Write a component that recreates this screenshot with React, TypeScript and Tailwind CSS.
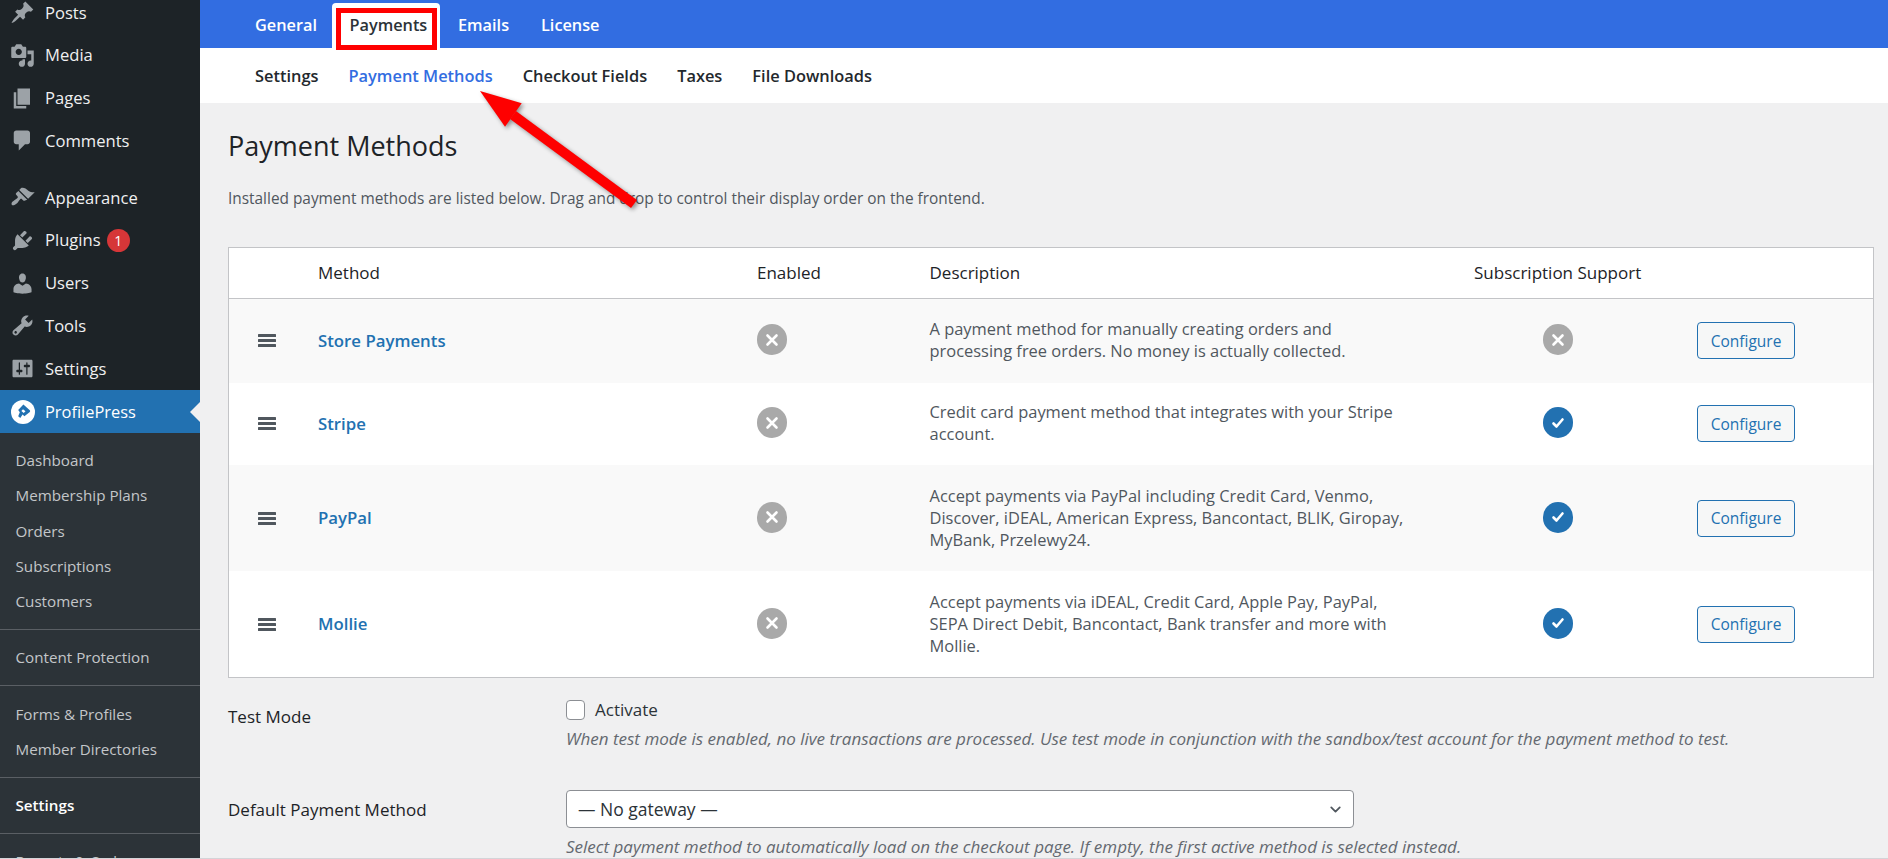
import React from "react";
import { ChevronDown } from "lucide-react";

const icons: Record<string, string> = {
  post: "M10.44 3.02l1.82-1.82 6.36 6.35-1.83 1.82c-1.05-.68-2.48-.57-3.41.36l-.75.75c-.92.93-1.04 2.35-.35 3.41l-1.83 1.82-2.41-2.41-2.8 2.79c-.42.42-3.38 2.71-3.8 2.29s1.86-3.39 2.28-3.81l2.79-2.79L4.1 9.36l1.83-1.82c1.05.69 2.48.57 3.4-.36l.75-.75c.93-.92 1.05-2.35.36-3.41z",
  media: "M13 11V4c0-.55-.45-1-1-1h-1.67L9 1H5L3.67 3H2c-.55 0-1 .45-1 1v7c0 .55.45 1 1 1h10c.55 0 1-.45 1-1zM7 4.5c1.38 0 2.5 1.12 2.5 2.5S8.38 9.5 7 9.5 4.5 8.38 4.5 7 5.62 4.5 7 4.5zM14 6h5v10.5c0 1.38-1.12 2.5-2.5 2.5S14 17.88 14 16.5s1.12-2.5 2.5-2.5c.17 0 .34.02.5.05V9h-3V6zm-4 8.05V13h2v3.5c0 1.38-1.12 2.5-2.5 2.5S7 17.88 7 16.5 8.12 14 9.5 14c.17 0 .34.02.5.05z",
  page: "M6 15V2h10v13H6zm-1 1h8v2H3V5h2v11z",
  comments: "M5 2h9c1.1 0 2 .9 2 2v7c0 1.1-.9 2-2 2h-2l-5 5v-5H5c-1.1 0-2-.9-2-2V4c0-1.1.9-2 2-2z",
  appearance: "M14.48 11.06L7.41 3.99l1.5-1.5c.5-.56 2.3-.47 3.51.32 1.21.8 1.43 1.28 2.91 2.1 1.18.64 2.45 1.26 4.45.85zm-.71.71L6.7 4.7 4.93 6.47c-.39.39-.39 1.02 0 1.41l1.06 1.06c.39.39.39 1.03 0 1.42-.6.6-1.43 1.11-2.21 1.69-.35.26-.7.53-1.01.84C1.43 13.23.78 15.24 1.53 16s2.76-.1 4.11-1.44c.31-.31.58-.66.84-1.01.58-.78 1.09-1.61 1.69-2.21.39-.39 1.02-.39 1.41 0l1.06 1.06c.39.39 1.02.39 1.41 0z",
  plugins: "M13.11 4.36L9.87 7.6 8 5.73l3.24-3.24c.35-.34 1.05-.2 1.56.32.52.51.66 1.21.31 1.55zm-8 1.77l.91-1.12 9.01 9.01-1.19.84c-.71.71-2.63 1.16-3.82 1.16H6.14L4.9 17.26c-.59.59-1.54.59-2.12 0-.59-.58-.59-1.53 0-2.12l1.24-1.24v-3.88c0-1.13.4-3.19 1.09-3.89zm7.26 3.97l3.24-3.24c.34-.35 1.04-.21 1.55.31.52.51.66 1.21.31 1.55l-3.24 3.25z",
  users: "M10 9.25c-2.27 0-2.73-3.44-2.73-3.44C7 4.02 7.82 2 9.97 2c2.16 0 2.98 2.02 2.71 3.81 0 0-.41 3.44-2.68 3.44zm0 2.57L12.72 10c2.39 0 4.52 2.33 4.52 4.53v2.49s-3.65 1.13-7.24 1.13c-3.65 0-7.24-1.13-7.24-1.13v-2.49c0-2.25 1.94-4.48 4.47-4.48z",
  tools: "M16.68 9.77c-1.34 1.34-3.3 1.67-4.95.99l-5.41 6.52c-.99.99-2.59.99-3.58 0s-.99-2.59 0-3.57l6.52-5.42c-.68-1.65-.35-3.61.99-4.95 1.28-1.28 3.12-1.62 4.72-1.06l-2.89 2.89 2.82 2.82 2.86-2.87c.53 1.58.18 3.39-1.08 4.65zM3.81 16.21c.4.39 1.04.39 1.43 0 .4-.4.4-1.04 0-1.43-.39-.4-1.03-.4-1.43 0-.39.39-.39 1.03 0 1.43z",
  settings: "M18 16V4c0-.55-.45-1-1-1H3c-.55 0-1 .45-1 1v12c0 .55.45 1 1 1h14c.55 0 1-.45 1-1zM8 11h1c.55 0 1 .45 1 1s-.45 1-1 1H8v1.5c0 .28-.22.5-.5.5s-.5-.22-.5-.5V13H6c-.55 0-1-.45-1-1s.45-1 1-1h1V5.5c0-.28.22-.5.5-.5s.5.22.5.5V11zm5-2h-1c-.55 0-1-.45-1-1s.45-1 1-1h1V5.5c0-.28.22-.5.5-.5s.5.22.5.5V7h1c.55 0 1 .45 1 1s-.45 1-1 1h-1v5.5c0 .28-.22.5-.5.5s-.5-.22-.5-.5V9z",
};

function MenuRow({ icon, label, badge }: { icon: string; label: string; badge?: string }) {
  return (
    <div className="flex h-[42.75px] items-center pl-[10px]">
      <svg viewBox="0 0 20 20" className="h-[25px] w-[25px] shrink-0 fill-[#9ca2a7]">
        <path d={icons[icon]} />
      </svg>
      <span className="ml-[10px] pt-[1px] text-[16.6px] text-[#f0f0f1]">{label}</span>
      {badge && (
        <span className="ml-[6px] flex h-[23px] w-[23px] items-center justify-center rounded-full bg-[#d63638] text-[14px] text-white">
          {badge}
        </span>
      )}
    </div>
  );
}

function SubRow({ label, bold }: { label: string; bold?: boolean }) {
  return (
    <div className={`flex h-[35.25px] items-center pl-[15.5px] pt-[1px] text-[15.2px] ${bold ? "font-semibold text-white" : "text-[#c3c6c9]"}`}>
      {label}
    </div>
  );
}

function SubDivider() {
  return <div className="my-[10px] h-px bg-[#5a5f64]" />;
}

function Sidebar() {
  return (
    <aside className="-mt-[8.75px] w-[200px] shrink-0 bg-[#1d2327]">
      <MenuRow icon="post" label="Posts" />
      <MenuRow icon="media" label="Media" />
      <MenuRow icon="page" label="Pages" />
      <MenuRow icon="comments" label="Comments" />
      <div className="h-[14px]" />
      <MenuRow icon="appearance" label="Appearance" />
      <MenuRow icon="plugins" label="Plugins" badge="1" />
      <MenuRow icon="users" label="Users" />
      <MenuRow icon="tools" label="Tools" />
      <MenuRow icon="settings" label="Settings" />
      <div className="relative flex h-[43px] items-center bg-[#2271b1] pl-[10.5px]">
        <svg viewBox="0 0 24 24" className="h-[24px] w-[24px] shrink-0">
          <circle cx="12" cy="12" r="12" fill="#fff" />
          <path
            fillRule="evenodd"
            d="M12.4 4.6l6.4 5.7c.5.5.5 1.1 0 1.6l-5.4 4.3-1.8-1.6-2.3 3.4-2.1-1.7 1.6-4-1.6-2.2zM12 9.2l-1.6 1.7 2.3 2.1 1.8-1.7z"
            fill="#2271b1"
          />
        </svg>
        <span className="ml-[10.5px] pt-[1px] text-[16.4px] text-white">ProfilePress</span>
        <svg viewBox="0 0 10 20" className="absolute right-0 top-[11.5px] h-[20px] w-[10px] fill-[#f0f0f1]">
          <path d="M10 0L0 10l10 10z" />
        </svg>
      </div>
      <div className="bg-[#2c3338] pt-[9.5px]">
        <SubRow label="Dashboard" />
        <SubRow label="Membership Plans" />
        <SubRow label="Orders" />
        <SubRow label="Subscriptions" />
        <SubRow label="Customers" />
        <SubDivider />
        <SubRow label="Content Protection" />
        <SubDivider />
        <SubRow label="Forms & Profiles" />
        <SubRow label="Member Directories" />
        <SubDivider />
        <SubRow label="Settings" bold />
        <SubDivider />
        <SubRow label="Reports & Orders" />
      </div>
    </aside>
  );
}

function TopTabs() {
  return (
    <div className="flex h-[48px] items-end bg-[#326de1] pl-[55px] text-[16.3px] font-semibold text-white">
      <div className="flex h-[45px] w-[77px] items-center pb-[1px]">General</div>
      <div className="relative flex h-[45px] w-[108px] items-center justify-start rounded-t-[4px] bg-white pb-[1px] pl-[17.5px] text-[#2c3338]">
        Payments
        <div className="absolute -bottom-[2px] left-[4px] top-[5px] w-[101px] border-[5px] border-[#ff0000]" />
      </div>
      <div className="flex h-[45px] w-[101px] items-center pb-[1px] pl-[18px]">Emails</div>
      <div className="flex h-[45px] items-center pb-[1px]">License</div>
    </div>
  );
}

function SubTabs() {
  return (
    <div className="flex h-[55px] items-center gap-[30px] bg-white pl-[55px] pt-[2px] text-[16.4px] font-semibold text-[#23282d]">
      <span>Settings</span>
      <span className="text-[#326de1]">Payment Methods</span>
      <span>Checkout Fields</span>
      <span>Taxes</span>
      <span>File Downloads</span>
    </div>
  );
}

function Status({ on }: { on: boolean }) {
  return (
    <div className={`-mt-[2px] flex h-[31px] w-[30px] items-center justify-center rounded-full ${on ? "bg-[#2271b1]" : "bg-[#a9a9a9]"}`}>
      {on ? (
        <svg viewBox="0 0 14 14" className="h-[14px] w-[14px]" fill="none" stroke="#fff" strokeWidth="2.6" strokeLinecap="round" strokeLinejoin="round">
          <path d="M2.5 7.5l3 3 6-7" />
        </svg>
      ) : (
        <svg viewBox="0 0 14 14" className="h-[14px] w-[14px]" fill="none" stroke="#fff" strokeWidth="2.6" strokeLinecap="round">
          <path d="M2.5 2.5l9 9M11.5 2.5l-9 9" />
        </svg>
      )}
    </div>
  );
}

const rows = [
  { name: "Store Payments", sub: false, h: "h-[83.5px]", bg: "bg-[#f9f9f9]", desc: ["A payment method for manually creating orders and", "processing free orders. No money is actually collected."] },
  { name: "Stripe", sub: true, h: "h-[82.5px]", bg: "bg-white", desc: ["Credit card payment method that integrates with your Stripe", "account."] },
  { name: "PayPal", sub: true, h: "h-[106px]", bg: "bg-[#f9f9f9]", desc: ["Accept payments via PayPal including Credit Card, Venmo,", "Discover, iDEAL, American Express, Bancontact, BLIK, Giropay,", "MyBank, Przelewy24."] },
  { name: "Mollie", sub: true, h: "h-[106px]", bg: "bg-white", desc: ["Accept payments via iDEAL, Credit Card, Apple Pay, PayPal,", "SEPA Direct Debit, Bancontact, Bank transfer and more with", "Mollie."] },
];

const cols = "grid grid-cols-[89px_439px_172.5px_544.5px_223px_1fr] items-center";

function MethodsTable() {
  return (
    <div className="border border-[#c3c4c7] bg-white">
      <div className={`${cols} h-[51px] border-b border-[#c3c4c7] text-[17px] font-medium text-[#1d2327]`}>
        <span />
        <span>Method</span>
        <span>Enabled</span>
        <span>Description</span>
        <span>Subscription Support</span>
        <span />
      </div>
      {rows.map((r) => (
        <div key={r.name} className={`${cols} ${r.h} ${r.bg}`}>
          <svg viewBox="0 0 18 13" className="ml-[29px] h-[13px] w-[18px] fill-[#50575e]">
            <rect width="18" height="3" y="0" rx="0.5" />
            <rect width="18" height="3" y="5" rx="0.5" />
            <rect width="18" height="3" y="10" rx="0.5" />
          </svg>
          <span className="text-[16.8px] font-semibold text-[#2271b1]">{r.name}</span>
          <Status on={false} />
          <div className="-mt-[1px] text-[16.45px] leading-[22px] whitespace-nowrap text-[#50575e]">
            {r.desc.map((l) => (
              <div key={l}>{l}</div>
            ))}
          </div>
          <div className="pl-[69px]">
            <Status on={r.sub} />
          </div>
          <div className="flex h-[37px] w-[98px] items-center justify-center rounded-[4px] border border-[#2271b1] bg-[#f6f7f7] pt-[1px] text-[15.5px] text-[#2271b1]">
            Configure
          </div>
        </div>
      ))}
    </div>
  );
}

function Arrow() {
  return (
    <svg className="pointer-events-none absolute left-[440px] top-[80px] h-[140px] w-[210px] overflow-visible drop-shadow-[2px_2px_2px_rgba(0,0,0,0.4)]" viewBox="0 0 210 140">
      <path d="M73 35L194 124" stroke="#fe0000" strokeWidth="10" fill="none" />
      <path d="M40 11L81.7 23.3 65 46.7z" fill="#fe0000" />
    </svg>
  );
}

export default function App() {
  return (
    <div className="relative flex h-[859px] w-[1888px] overflow-hidden border-b border-[#d4d4d8] bg-[#f0f0f1] font-['Open_Sans','Noto_Sans',sans-serif]">
      <Sidebar />
      <main className="min-w-0 flex-1">
        <TopTabs />
        <SubTabs />
        <div className="pl-[28px] pr-[14px]">
          <h1 className="pt-[24px] text-[27px] leading-[38px] text-[#1d2327]">Payment Methods</h1>
          <p className="mt-[23px] text-[15.4px] leading-[22px] text-[#50575e]">
            Installed payment methods are listed below. Drag and drop to control their display order on the frontend.
          </p>
          <div className="mt-[37px]">
            <MethodsTable />
          </div>
          <div className="mt-[21px] flex">
            <div className="w-[338px] pt-[5px] text-[17px] font-medium text-[#1d2327]">Test Mode</div>
            <div>
              <div className="flex h-[22px] items-center">
                <div className="h-[20px] w-[19px] rounded-[4px] border border-[#8c8f94] bg-white" />
                <span className="ml-[10px] text-[17px] font-medium text-[#2c3338]">Activate</span>
              </div>
              <p className="mt-[7px] text-[17px] leading-[22px] whitespace-nowrap text-[#646970] italic">
                When test mode is enabled, no live transactions are processed. Use test mode in conjunction with the sandbox/test account for the payment method to test.
              </p>
            </div>
          </div>
          <div className="mt-[40px] flex">
            <div className="w-[338px] pt-[7px] text-[17px] font-medium text-[#1d2327]">Default Payment Method</div>
            <div>
              <div className="flex h-[38px] w-[788px] items-center justify-between rounded-[4px] border border-[#8c8f94] bg-white pl-[11px] pr-[9px] text-[17.5px] text-[#2c3338]">
                <span>— No gateway —</span>
                <ChevronDown size={17} strokeWidth={2.5} className="text-[#50575e]" />
              </div>
              <p className="mt-[8px] text-[17px] leading-[22px] whitespace-nowrap text-[#646970] italic">
                Select payment method to automatically load on the checkout page. If empty, the first active method is selected instead.
              </p>
            </div>
          </div>
        </div>
      </main>
      <Arrow />
    </div>
  );
}
